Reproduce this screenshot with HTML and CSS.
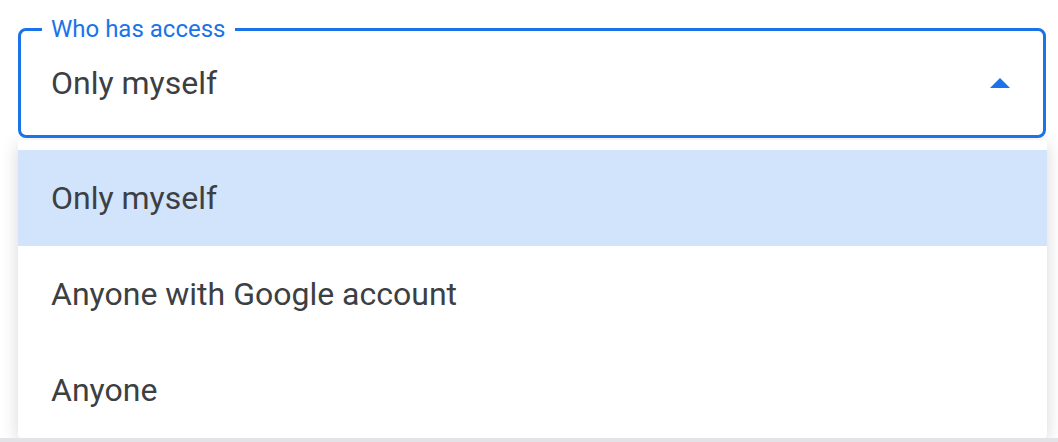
FILE: index.html
```html
<!DOCTYPE html>
<html lang="en">
<head>
    <meta charset="UTF-8">
    <meta name="viewport" content="width=device-width, initial-scale=1.0">
    <title>Who has access</title>
    <link rel="stylesheet" href="styles.css">
</head>
<body>
    <div class="sheet">
        <div class="select-field">
            <span class="select-label">Who has access</span>
            <span class="select-value">Only myself</span>
            <svg class="select-arrow" width="20" height="10" viewBox="0 0 20 10">
                <path d="M0 10 L10 0 L20 10 Z" fill="#1a73e8"/>
            </svg>
        </div>
        <ul class="select-menu">
            <li class="selected">Only myself</li>
            <li>Anyone with Google account</li>
            <li>Anyone</li>
        </ul>
    </div>
    <div class="page-edge"></div>
</body>
</html>
```

FILE: styles.css
```css
body {
    font-family: Roboto, 'Liberation Sans', sans-serif;
    margin: 0;
    padding: 0;
    background-color: #ffffff;
    color: #3c4043;
    overflow: hidden;
}

.sheet {
    padding: 28px 12px 0 18px;
}

.select-field {
    position: relative;
    box-sizing: border-box;
    height: 110px;
    border: 3px solid #1a73e8;
    border-radius: 8px;
    padding: 0 33px 0 30px;
    display: flex;
    align-items: center;
    justify-content: space-between;
    background: #ffffff;
}

.select-label {
    position: absolute;
    top: -16px;
    left: 21px;
    padding: 0 10px 0 9px;
    background: #ffffff;
    color: #1a73e8;
    font-size: 24px;
    line-height: 28px;
}

.select-value {
    font-size: 32px;
}

.select-arrow {
    display: block;
}

.select-menu {
    list-style: none;
    margin: 2px -1px 0 0;
    padding: 10px 0 0;
    background: #ffffff;
    border-radius: 4px;
    box-shadow: 0 4px 18px rgba(0, 0, 0, 0.16);
}

.select-menu li {
    height: 96px;
    padding-left: 33px;
    display: flex;
    align-items: center;
    font-size: 32px;
}

.select-menu li.selected {
    background: #d2e3fc;
}

.page-edge {
    height: 4px;
    background: #e2e2e7;
}
```
